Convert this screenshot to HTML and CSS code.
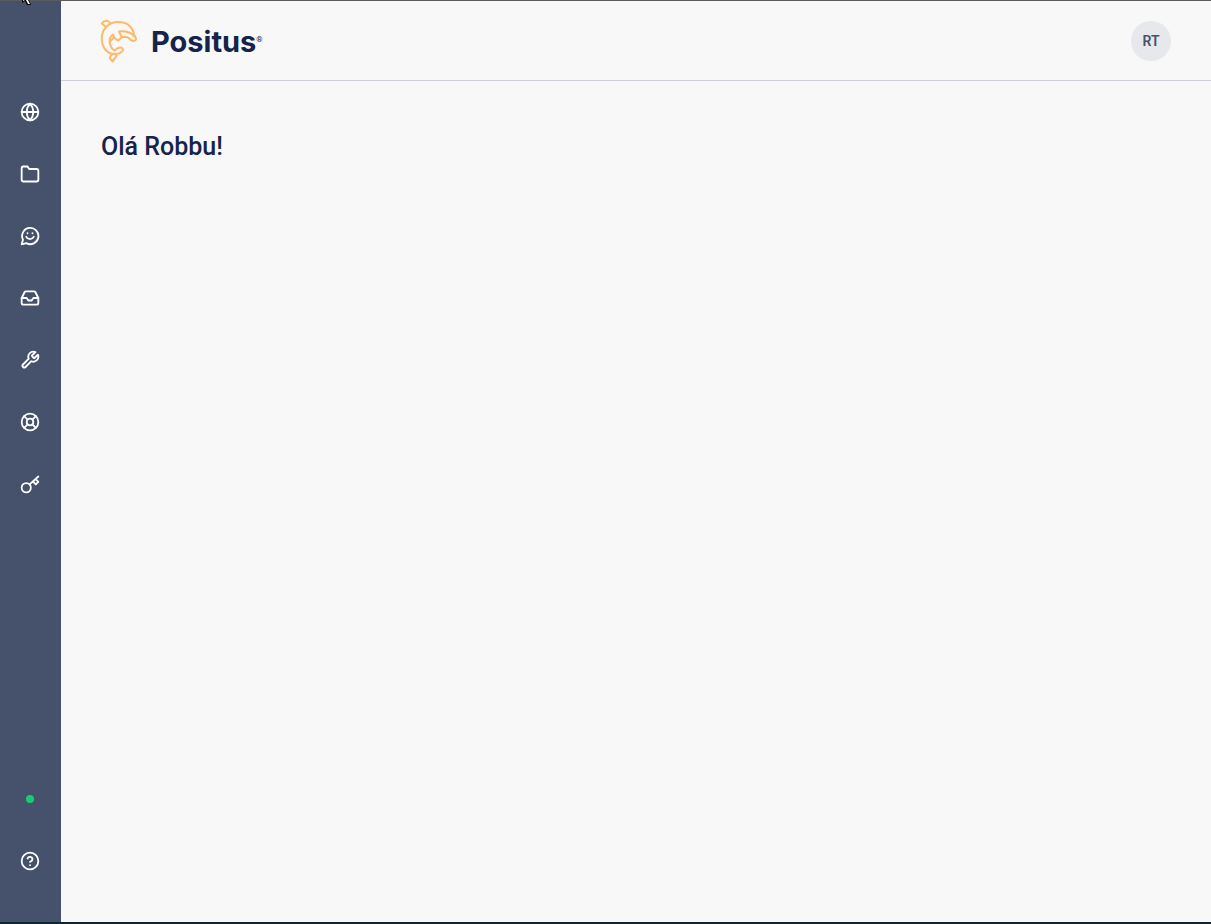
FILE: index.html
```html
<!DOCTYPE html>
<html lang="pt-BR">
<head>
    <meta charset="UTF-8">
    <meta name="viewport" content="width=device-width, initial-scale=1.0">
    <title>Positus</title>
    <link rel="stylesheet" href="styles.css">
</head>
<body>
    <!-- Sidebar -->
    <aside class="sidebar">
        <nav class="sidebar-nav">
            <a href="#" class="sidebar-link">
                <svg class="icon" viewBox="0 0 24 24"><circle cx="12" cy="12" r="10"/><path d="M2 12h20M12 2a15.3 15.3 0 0 1 4 10 15.3 15.3 0 0 1-4 10 15.3 15.3 0 0 1-4-10 15.3 15.3 0 0 1 4-10z"/></svg>
            </a>
            <a href="#" class="sidebar-link">
                <svg class="icon" viewBox="0 0 24 24"><path d="M22 19a2 2 0 0 1-2 2H4a2 2 0 0 1-2-2V5a2 2 0 0 1 2-2h5l2 3h9a2 2 0 0 1 2 2z"/></svg>
            </a>
            <a href="#" class="sidebar-link">
                <svg class="icon" viewBox="0 0 24 24"><path d="M2 22l1.600-5.500A9.800 9.800 0 1 1 7.600 20.600z"/><path d="M7.500 13c1 1.900 2.600 2.700 4.500 2.700s3.500-.8 4.500-2.700M9 8.500v.2M15 8.500v.2"/></svg>
            </a>
            <a href="#" class="sidebar-link">
                <svg class="icon" viewBox="0 0 24 24"><path d="M22 12h-6l-2 3h-4l-2-3H2"/><path d="M5.450 5.110L2 12v6a2 2 0 0 0 2 2h16a2 2 0 0 0 2-2v-6l-3.450-6.890A2 2 0 0 0 16.760 4H7.240a2 2 0 0 0-1.790 1.110z"/></svg>
            </a>
            <a href="#" class="sidebar-link">
                <svg class="icon" viewBox="0 0 24 24"><path d="M14.700 6.300a1 1 0 0 0 0 1.400l1.600 1.600a1 1 0 0 0 1.400 0l3.770-3.770a6 6 0 0 1-7.940 7.940l-6.910 6.910a2.120 2.120 0 0 1-3-3l6.910-6.910a6 6 0 0 1 7.940-7.940l-3.760 3.760z"/></svg>
            </a>
            <a href="#" class="sidebar-link">
                <svg class="icon" viewBox="0 0 24 24"><circle cx="12" cy="12" r="10"/><circle cx="12" cy="12" r="4"/><path d="M4.930 4.930l4.240 4.240M14.830 14.830l4.240 4.240M14.830 9.170l4.240-4.240M4.930 19.070l4.240-4.240"/></svg>
            </a>
            <a href="#" class="sidebar-link">
                <svg class="icon" viewBox="0 0 24 24"><circle cx="7.500" cy="16.500" r="5.500"/><path d="M11.500 12.500L22 3M15.500 9l3.500 3.500 3-3-3.500-3.500"/></svg>
            </a>
        </nav>
        <div class="sidebar-footer">
            <div class="sidebar-link"><span class="status-dot"></span></div>
            <a href="#" class="sidebar-link">
                <svg class="icon" viewBox="0 0 24 24"><circle cx="12" cy="12" r="10"/><path d="M9.090 9a3 3 0 0 1 5.830 1c0 2-3 3-3 3M12 17h.01"/></svg>
            </a>
        </div>
    </aside>

    <!-- Content -->
    <div class="page">
        <header class="header">
            <a href="#" class="logo">
                <svg class="logo-dolphin" viewBox="0 0 38 44">
                    <path d="M12 35C5.500 33 1.700 27 1.700 20C1.700 10 8.500 3 18.500 3C27 3 33 8 34 15.500L36 19.500C36.500 21.500 33.500 22.500 31.500 21.500C29.500 20 29 18.500 26.500 18H22C20.500 16.500 20 14.500 19 12.500C24 12 30 12.500 34.500 17.500"/>
                    <path d="M10 3.800C8.500.8 4 .8 1.800 4.500L5.500 7.500"/>
                    <path d="M22 18L18.300 21.500C15.500 20.500 14 18.500 13 15.500C9.500 18 9 22.500 10.500 26.500C11.500 29.500 13 31 15 31.500C16.500 29.500 18.500 28 21 28.500C23.500 29.500 23.500 31.500 22 32.500C20 34.500 17.500 35.500 15 35"/>
                    <path d="M10.500 22L14 18.500"/>
                    <path d="M12.500 35C10.500 36.500 9.800 38 10 39.500L12.700 42.500C13.500 39.500 16 39 16.500 36.500L14 34.500Z"/>
                </svg>
                <span class="logo-name">Positus</span>
                <span class="logo-mark">®</span>
            </a>
            <button type="button" class="avatar">RT</button>
        </header>
        <main class="content">
            <h1 class="greeting">Olá Robbu!</h1>
        </main>
    </div>

    <svg class="cursor" viewBox="0 0 12 5"><path d="M0 0v3l3-2 2 4h4L7 0z"/><path class="cursor-fill" d="M1 0v1l2-1zM4 0l2 4h2L6 0z"/></svg>
</body>
</html>
```
FILE: styles.css
```css
:root {
    --primary-color: #46516c;
    --dark-color: #16234a;
    --accent-color: #ffb967;
    --success-color: #16cc75;
    --background-color: #f8f8f8;
    --border-color: #cdd0dc;
}

* {
    box-sizing: border-box;
    margin: 0;
    padding: 0;
}

body {
    display: flex;
    min-height: 100vh;
    border-top: 1px solid #5b5b60;
    border-bottom: 2px solid #0b2730;
    background-color: var(--background-color);
    color: var(--dark-color);
    font-family: Roboto, sans-serif;
}

.sidebar {
    display: flex;
    flex-direction: column;
    justify-content: space-between;
    flex-shrink: 0;
    width: 61px;
    padding: 80px 1px 30px 0;
    background-color: var(--primary-color);
}

.sidebar-link {
    display: flex;
    align-items: center;
    justify-content: center;
    height: 62px;
    color: #fff;
}

.icon {
    width: 20px;
    height: 20px;
    fill: none;
    stroke: currentColor;
    stroke-width: 2.2;
    stroke-linecap: round;
    stroke-linejoin: round;
}

.status-dot {
    width: 8px;
    height: 8px;
    border-radius: 50%;
    background-color: var(--success-color);
}

.page {
    flex: 1;
}

.header {
    display: flex;
    align-items: center;
    justify-content: space-between;
    padding: 18px 40px 17px 39px;
    border-bottom: 1px solid var(--border-color);
}

.logo {
    display: flex;
    align-items: center;
    color: var(--dark-color);
    text-decoration: none;
}

.logo-dolphin {
    width: 38px;
    height: 44px;
    margin-right: 13px;
    fill: none;
    stroke: var(--accent-color);
    stroke-width: 2;
    stroke-linecap: round;
    stroke-linejoin: round;
}

.logo-name {
    padding-top: 2px;
    font-family: Inter, sans-serif;
    font-size: 29px;
    font-weight: 700;
    line-height: 42px;
}

.logo-mark {
    font-size: 8px;
    line-height: 8px;
    padding-bottom: 3px;
}

.avatar {
    width: 40px;
    height: 40px;
    border: none;
    border-radius: 50%;
    background-color: #e7e8ec;
    color: var(--primary-color);
    font-family: inherit;
    font-size: 14px;
    font-weight: 600;
    cursor: pointer;
}

.content {
    padding: 48px 40px;
}

.greeting {
    font-size: 25px;
    font-weight: 500;
    line-height: 36px;
}

.cursor {
    position: absolute;
    top: 0;
    left: 22px;
    width: 12px;
    height: 5px;
}

.cursor-fill {
    fill: #fff;
}
```
